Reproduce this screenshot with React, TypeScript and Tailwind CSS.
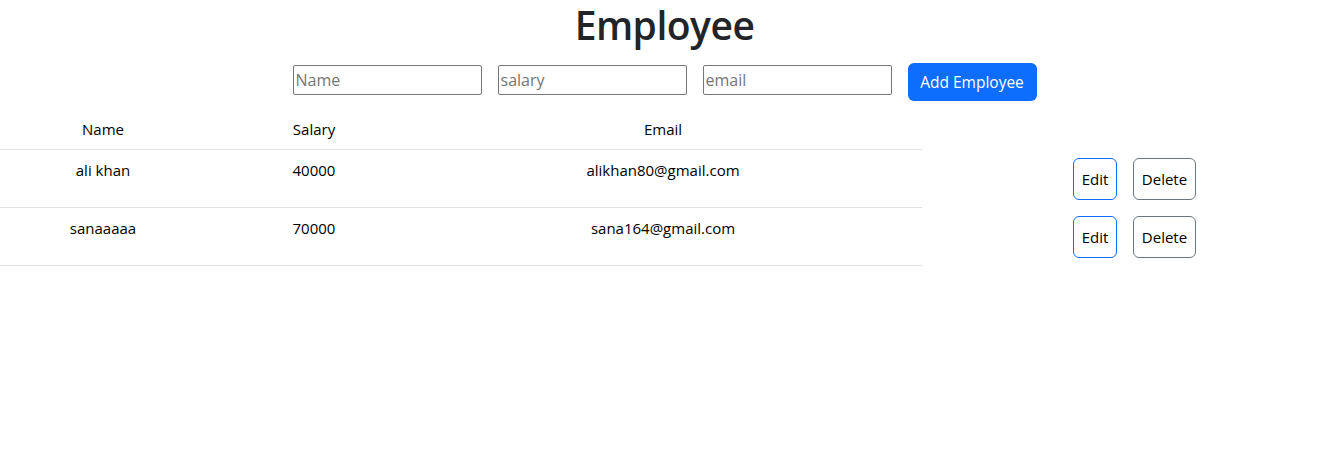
import React from 'react';

type Employee = { name: string; salary: string; email: string };

const employees: Employee[] = [
  { name: 'ali khan', salary: '40000', email: 'alikhan80@gmail.com' },
  { name: 'sanaaaaa', salary: '70000', email: 'sana164@gmail.com' },
];

const inputClass =
  'h-[30px] w-[189px] rounded-[2px] border border-[#767676] px-[2px] text-base text-[#212529] outline-none placeholder:text-[#757575]';

export default function App() {
  return (
    <div className="min-h-[456px] bg-white text-[#212529]" style={{ fontFamily: '"Open Sans", "Noto Sans", sans-serif' }}>
      <h1 className="text-center text-[39px] font-semibold leading-[50px] tracking-[-0.5px]">Employee</h1>

      <div className="mt-[13px] flex items-start justify-center gap-4">
        <input className={`${inputClass} mt-[2px]`} placeholder="Name" />
        <input className={`${inputClass} mt-[2px]`} placeholder="salary" />
        <input className={`${inputClass} mt-[2px]`} placeholder="email" />
        <button
          type="button"
          className="h-[38px] w-[129px] rounded-md bg-[#0d6efd] text-[15.5px] leading-6 text-white"
        >
          Add Employee
        </button>
      </div>

      <div className="mt-[8px] flex">
        <div className="w-[922px]">
          <div className="flex border-b border-[#dee2e6] py-2 text-[15px] leading-6 text-black">
            <div className="w-[206px] text-center">Name</div>
            <div className="w-[216px] text-center">Salary</div>
            <div className="w-[482px] text-center">Email</div>
          </div>
          {employees.map((emp) => (
            <div key={emp.email} className="flex h-[58px] border-b border-[#dee2e6] py-2 text-[15px] leading-6 text-black">
              <div className="w-[206px] text-center">{emp.name}</div>
              <div className="w-[216px] text-center">{emp.salary}</div>
              <div className="w-[482px] text-center">{emp.email}</div>
            </div>
          ))}
        </div>
        <div className="ml-[151px] pt-[41px]">
          {employees.map((emp) => (
            <div key={emp.email} className="flex h-[58px] gap-4 pt-[8px]">
              <button
                type="button"
                className="h-[42px] w-[44px] rounded-md border border-[#0d6efd] text-[15px] text-black"
              >
                Edit
              </button>
              <button
                type="button"
                className="h-[42px] w-[63px] rounded-md border border-[#6c757d] text-[15px] text-black"
              >
                Delete
              </button>
            </div>
          ))}
        </div>
      </div>
    </div>
  );
}
